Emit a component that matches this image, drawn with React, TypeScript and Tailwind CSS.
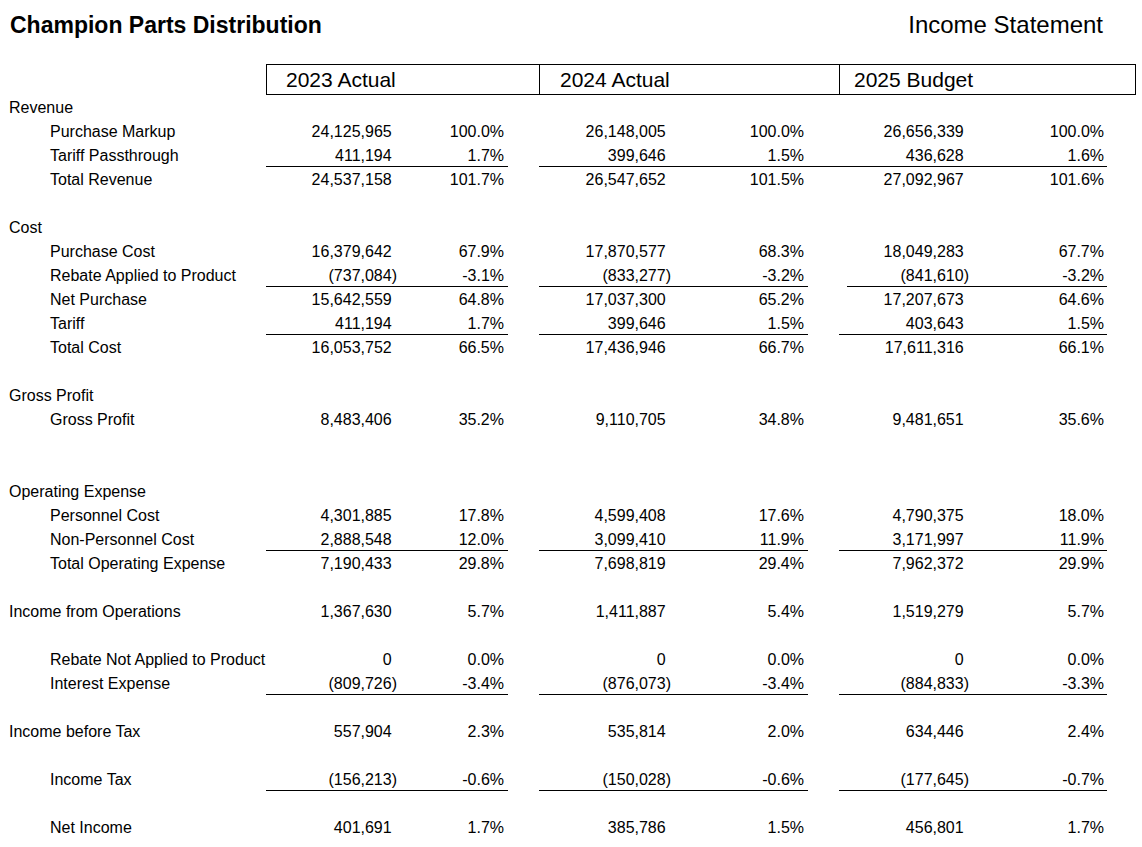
type Row = {
  label?: string;
  sub?: boolean;
  vals?: string[];
  line?: 'std' | 'wide' | 'inset';
};

const rows: Row[] = [
  { label: 'Revenue' },
  { label: 'Purchase Markup', sub: true, vals: ['24,125,965', '100.0%', '26,148,005', '100.0%', '26,656,339', '100.0%'] },
  { label: 'Tariff Passthrough', sub: true, vals: ['411,194', '1.7%', '399,646', '1.5%', '436,628', '1.6%'], line: 'wide' },
  { label: 'Total Revenue', sub: true, vals: ['24,537,158', '101.7%', '26,547,652', '101.5%', '27,092,967', '101.6%'] },
  {},
  { label: 'Cost' },
  { label: 'Purchase Cost', sub: true, vals: ['16,379,642', '67.9%', '17,870,577', '68.3%', '18,049,283', '67.7%'] },
  { label: 'Rebate Applied to Product', sub: true, vals: ['(737,084)', '-3.1%', '(833,277)', '-3.2%', '(841,610)', '-3.2%'], line: 'inset' },
  { label: 'Net Purchase', sub: true, vals: ['15,642,559', '64.8%', '17,037,300', '65.2%', '17,207,673', '64.6%'] },
  { label: 'Tariff', sub: true, vals: ['411,194', '1.7%', '399,646', '1.5%', '403,643', '1.5%'], line: 'std' },
  { label: 'Total Cost', sub: true, vals: ['16,053,752', '66.5%', '17,436,946', '66.7%', '17,611,316', '66.1%'] },
  {},
  { label: 'Gross Profit' },
  { label: 'Gross Profit', sub: true, vals: ['8,483,406', '35.2%', '9,110,705', '34.8%', '9,481,651', '35.6%'] },
  {},
  {},
  { label: 'Operating Expense' },
  { label: 'Personnel Cost', sub: true, vals: ['4,301,885', '17.8%', '4,599,408', '17.6%', '4,790,375', '18.0%'] },
  { label: 'Non-Personnel Cost', sub: true, vals: ['2,888,548', '12.0%', '3,099,410', '11.9%', '3,171,997', '11.9%'], line: 'std' },
  { label: 'Total Operating Expense', sub: true, vals: ['7,190,433', '29.8%', '7,698,819', '29.4%', '7,962,372', '29.9%'] },
  {},
  { label: 'Income from Operations', vals: ['1,367,630', '5.7%', '1,411,887', '5.4%', '1,519,279', '5.7%'] },
  {},
  { label: 'Rebate Not Applied to Product', sub: true, vals: ['0', '0.0%', '0', '0.0%', '0', '0.0%'] },
  { label: 'Interest Expense', sub: true, vals: ['(809,726)', '-3.4%', '(876,073)', '-3.4%', '(884,833)', '-3.3%'], line: 'std' },
  {},
  { label: 'Income before Tax', vals: ['557,904', '2.3%', '535,814', '2.0%', '634,446', '2.4%'] },
  {},
  { label: 'Income Tax', sub: true, vals: ['(156,213)', '-0.6%', '(150,028)', '-0.6%', '(177,645)', '-0.7%'], line: 'std' },
  {},
  { label: 'Net Income', sub: true, vals: ['401,691', '1.7%', '385,786', '1.5%', '456,801', '1.7%'] },
];

const grid = 'grid grid-cols-[266px_131px_111px_31px_132px_137px_31px_130px_138px_29px]';

// data cols after the label: 0 g1 value, 1 g1 pct, 2 gap, 3 g2 value, 4 g2 pct, 5 gap, 6 g3 value, 7 g3 pct, 8 end
function underlined(row: Row, col: number) {
  if (!row.line) return false;
  if ([0, 1, 3, 4, 6, 7].includes(col)) return true;
  if (row.line === 'wide' && col === 5) return true;
  return false;
}

function Amount({ v }: { v: string }) {
  const neg = v.startsWith('(');
  return (
    <span>
      {v}
      {!neg && <span className="invisible">)</span>}
    </span>
  );
}

function DataRow({ row }: { row: Row }) {
  const cells = [];
  for (let c = 0; c < 9; c++) {
    const line = underlined(row, c);
    const inset = row.line === 'inset' && c === 6;
    let content: React.ReactNode = null;
    if (row.vals) {
      if (c === 0) content = <Amount v={row.vals[0]} />;
      if (c === 1) content = row.vals[1];
      if (c === 3) content = <Amount v={row.vals[2]} />;
      if (c === 4) content = row.vals[3];
      if (c === 6) content = <Amount v={row.vals[4]} />;
      if (c === 7) content = row.vals[5];
    }
    const pad = c === 1 || c === 4 ? 'pr-1' : c === 7 ? 'pr-[3px]' : '';
    cells.push(
      <div key={c} className="h-6 flex">
        <div
          className={`flex-1 flex items-center justify-end pt-[2px] ${pad} ${inset ? 'ml-2' : ''} ${
            line ? 'border-b border-black' : 'border-b border-transparent'
          }`}
        >
          {content}
        </div>
      </div>
    );
  }
  return (
    <div className={grid}>
      <div className={`h-6 flex items-center pt-[2px] whitespace-nowrap ${row.sub ? 'pl-[50px]' : 'pl-[9px]'}`}>
        {row.label}
      </div>
      {cells}
    </div>
  );
}

export default function App() {
  return (
    <main
      className="min-h-screen w-[1142px] bg-white text-black text-[16px] leading-6"
      style={{ fontFamily: '"Liberation Sans", Arial, sans-serif' }}
    >
      <div className="h-16 flex items-start justify-between pl-[10px] pr-[39px] pt-[11px]">
        <h1 className="text-[23px] leading-7 font-bold">Champion Parts Distribution</h1>
        <h2 className="text-[24px] leading-7">Income Statement</h2>
      </div>

      <div className={grid}>
        <div />
        <div className="col-span-3 h-[31px] flex items-center pl-[19px] pt-[1px] border border-r-0 border-black text-[21px]">
          2023 Actual
        </div>
        <div className="col-span-3 h-[31px] flex items-center pl-[20px] pt-[1px] border border-r-0 border-black text-[21px]">
          2024 Actual
        </div>
        <div className="col-span-3 h-[31px] flex items-center pl-[14px] pt-[1px] border border-black text-[21px]">
          2025 Budget
        </div>
      </div>

      <div>
        {rows.map((r, i) => (
          <DataRow key={i} row={r} />
        ))}
      </div>
    </main>
  );
}
